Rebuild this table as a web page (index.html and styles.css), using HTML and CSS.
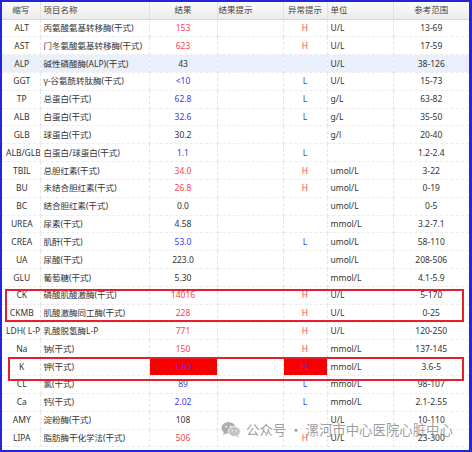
FILE: index.html
```html
<!DOCTYPE html>
<html lang="zh-CN">
<head>
<meta charset="utf-8">
<title>检验结果</title>
<link rel="stylesheet" href="styles.css">
</head>
<body>
<div class="frame">
  <table class="grid">
    <colgroup>
      <col class="c-abbr"><col class="c-name"><col class="c-res"><col class="c-hint"><col class="c-flag"><col class="c-unit"><col class="c-ref">
    </colgroup>
    <thead>
      <tr>
        <th class="ctr">缩写</th><th class="lft">项目名称</th><th class="ctr">结果</th><th class="lft">结果提示</th><th class="ctr">异常提示</th><th class="lft">单位</th><th class="ctr">参考范围</th>
      </tr>
    </thead>
    <tbody>
      <tr><td class="ctr">ALT</td><td>丙氨酸氨基转移酶(干式)</td><td class="ctr hi">153</td><td></td><td class="ctr hi">H</td><td>U/L</td><td class="ctr">13-69</td></tr>
      <tr><td class="ctr">AST</td><td>门冬氨酸氨基转移酶(干式)</td><td class="ctr hi">623</td><td></td><td class="ctr hi">H</td><td>U/L</td><td class="ctr">17-59</td></tr>
      <tr class="sel"><td class="ctr">ALP</td><td>碱性磷酸酶(ALP)(干式)</td><td class="ctr">43</td><td></td><td></td><td>U/L</td><td class="ctr">38-126</td></tr>
      <tr><td class="ctr">GGT</td><td>γ-谷氨酰转肽酶(干式)</td><td class="ctr lo">&lt;10</td><td></td><td class="ctr lo">L</td><td>U/L</td><td class="ctr">15-73</td></tr>
      <tr><td class="ctr">TP</td><td>总蛋白(干式)</td><td class="ctr lo">62.8</td><td></td><td class="ctr lo">L</td><td>g/L</td><td class="ctr">63-82</td></tr>
      <tr><td class="ctr">ALB</td><td>白蛋白(干式)</td><td class="ctr lo">32.6</td><td></td><td class="ctr lo">L</td><td>g/L</td><td class="ctr">35-50</td></tr>
      <tr><td class="ctr">GLB</td><td>球蛋白(干式)</td><td class="ctr">30.2</td><td></td><td></td><td>g/l</td><td class="ctr">20-40</td></tr>
      <tr><td class="ctr">ALB/GLB</td><td>白蛋白/球蛋白(干式)</td><td class="ctr lo">1.1</td><td></td><td class="ctr lo">L</td><td></td><td class="ctr">1.2-2.4</td></tr>
      <tr><td class="ctr">TBIL</td><td>总胆红素(干式)</td><td class="ctr hi">34.0</td><td></td><td class="ctr hi">H</td><td>umol/L</td><td class="ctr">3-22</td></tr>
      <tr><td class="ctr">BU</td><td>未结合胆红素(干式)</td><td class="ctr hi">26.8</td><td></td><td class="ctr hi">H</td><td>umol/L</td><td class="ctr">0-19</td></tr>
      <tr><td class="ctr">BC</td><td>结合胆红素(干式)</td><td class="ctr">0.0</td><td></td><td></td><td>umol/L</td><td class="ctr">0-5</td></tr>
      <tr><td class="ctr">UREA</td><td>尿素(干式)</td><td class="ctr">4.58</td><td></td><td></td><td>mmol/L</td><td class="ctr">3.2-7.1</td></tr>
      <tr><td class="ctr">CREA</td><td>肌酐(干式)</td><td class="ctr lo">53.0</td><td></td><td class="ctr lo">L</td><td>umol/L</td><td class="ctr">58-110</td></tr>
      <tr><td class="ctr">UA</td><td>尿酸(干式)</td><td class="ctr">223.0</td><td></td><td></td><td>umol/L</td><td class="ctr">208-506</td></tr>
      <tr><td class="ctr">GLU</td><td>葡萄糖(干式)</td><td class="ctr">5.30</td><td></td><td></td><td>mmol/L</td><td class="ctr">4.1-5.9</td></tr>
      <tr><td class="ctr">CK</td><td>磷酸肌酸激酶(干式)</td><td class="ctr hi">14016</td><td></td><td class="ctr hi">H</td><td>U/L</td><td class="ctr">5-170</td></tr>
      <tr><td class="ctr">CKMB</td><td>肌酸激酶同工酶(干式)</td><td class="ctr hi">228</td><td></td><td class="ctr hi">H</td><td>U/L</td><td class="ctr">0-25</td></tr>
      <tr><td class="ctr">LDH( L-P)</td><td>乳酸脱氢酶L-P</td><td class="ctr hi">771</td><td></td><td class="ctr hi">H</td><td>U/L</td><td class="ctr">120-250</td></tr>
      <tr><td class="ctr">Na</td><td>钠(干式)</td><td class="ctr hi">150</td><td></td><td class="ctr hi">H</td><td>mmol/L</td><td class="ctr">137-145</td></tr>
      <tr><td class="ctr">K</td><td>钾(干式)</td><td class="ctr crit">1.80</td><td></td><td class="ctr crit">PL</td><td>mmol/L</td><td class="ctr">3.6-5</td></tr>
      <tr><td class="ctr">CL</td><td>氯(干式)</td><td class="ctr lo">89</td><td></td><td class="ctr lo">L</td><td>mmol/L</td><td class="ctr">98-107</td></tr>
      <tr><td class="ctr">Ca</td><td>钙(干式)</td><td class="ctr lo">2.02</td><td></td><td class="ctr lo">L</td><td>mmol/L</td><td class="ctr">2.1-2.55</td></tr>
      <tr><td class="ctr">AMY</td><td>淀粉酶(干式)</td><td class="ctr">108</td><td></td><td></td><td>U/L</td><td class="ctr">10-110</td></tr>
      <tr><td class="ctr">LIPA</td><td>脂肪酶干化学法(干式)</td><td class="ctr hi">506</td><td></td><td class="ctr hi">H</td><td>U/L</td><td class="ctr">23-300</td></tr>
    </tbody>
  </table>
  <div class="mark mark-ck"></div>
  <div class="mark mark-k"></div>
  <div class="watermark">
    <svg class="wx" viewBox="0 0 24 20" width="20" height="17" aria-hidden="true">
      <ellipse cx="9" cy="8" rx="8.5" ry="7" fill="#9a9a9a"/>
      <path d="M3.5 13 L2.5 17 L7 14.2 Z" fill="#9a9a9a"/>
      <ellipse cx="16" cy="12.5" rx="7.3" ry="6" fill="#b5b5b5" stroke="#fff" stroke-width="1"/>
      <path d="M20.5 17 L22 19.6 L18 17.8 Z" fill="#b5b5b5"/>
      <circle cx="6" cy="6.5" r="1.1" fill="#fff"/>
      <circle cx="11.5" cy="6.5" r="1.1" fill="#fff"/>
      <circle cx="13.5" cy="11.5" r="0.9" fill="#fff"/>
      <circle cx="18.5" cy="11.5" r="0.9" fill="#fff"/>
    </svg>
    <span class="wm-text">公众号 · 漯河市中心医院心脏中心</span>
  </div>
</div>
</body>
</html>
```

FILE: styles.css
```css
html, body {
  margin: 0;
  padding: 0;
  background: #ffffff;
}

body {
  width: 472px;
  height: 452px;
  overflow: hidden;
  font-family: "Noto Sans", "Noto Sans CJK SC", sans-serif;
  font-size: 8.5px;
  color: #333333;
}

.frame {
  position: relative;
  box-sizing: border-box;
  width: 472px;
  height: 452px;
  border-style: solid;
  border-color: #2424d8;
  border-width: 2px 3px 2px 2px;
  overflow: hidden;
}

.grid {
  width: 467px;
  table-layout: fixed;
  border-collapse: collapse;
}

.c-abbr { width: 38px; }
.c-name { width: 109px; }
.c-res  { width: 68px; }
.c-hint { width: 66px; }
.c-flag { width: 44px; }
.c-unit { width: 66px; }
.c-ref  { width: 76px; }

.grid th,
.grid td {
  padding: 0 3px;
  white-space: nowrap;
  overflow: hidden;
  font-weight: normal;
  text-align: left;
  line-height: 12px;
}

.grid thead tr {
  height: 17px;
  background: linear-gradient(#fbfbfb, #ececec);
}

.grid th {
  color: #444444;
  border-right: 1px solid #e2e2e2;
  border-bottom: 1px solid #d8d8d8;
}

.grid th:nth-child(4) { padding-left: 1px; }

.grid tbody tr {
  height: 17.83px;
}

.grid td {
  border-right: 1px dashed #e6e6e6;
  border-bottom: 1px dashed #ececec;
}

.grid th:last-child,
.grid td:last-child { border-right: none; }

.grid td:first-child { padding: 0 2px 0 4px; }

.ctr { text-align: center !important; }
.lft { text-align: left; }

.sel td { background: #e9effb; }

.hi { color: #ff3b4e; }
.lo { color: #3a3af2; }
.crit {
  background: #f80000;
  color: #7a2bd6;
}

.mark {
  position: absolute;
  box-sizing: border-box;
  border: 2px solid #e5202c;
}

.mark-ck {
  left: 3px;
  top: 287px;
  width: 459px;
  height: 33px;
}

.mark-k {
  left: 6px;
  top: 355px;
  width: 456px;
  height: 24px;
}

.watermark {
  position: absolute;
  left: 219px;
  top: 417px;
  display: flex;
  align-items: center;
  gap: 5px;
  pointer-events: none;
}

.wx { display: block; opacity: 0.8; }

.wm-text {
  font-family: "Noto Sans CJK SC", sans-serif;
  font-size: 13.4px;
  line-height: 20px;
  color: rgba(120, 120, 120, 0.72);
  letter-spacing: 0;
}
```
